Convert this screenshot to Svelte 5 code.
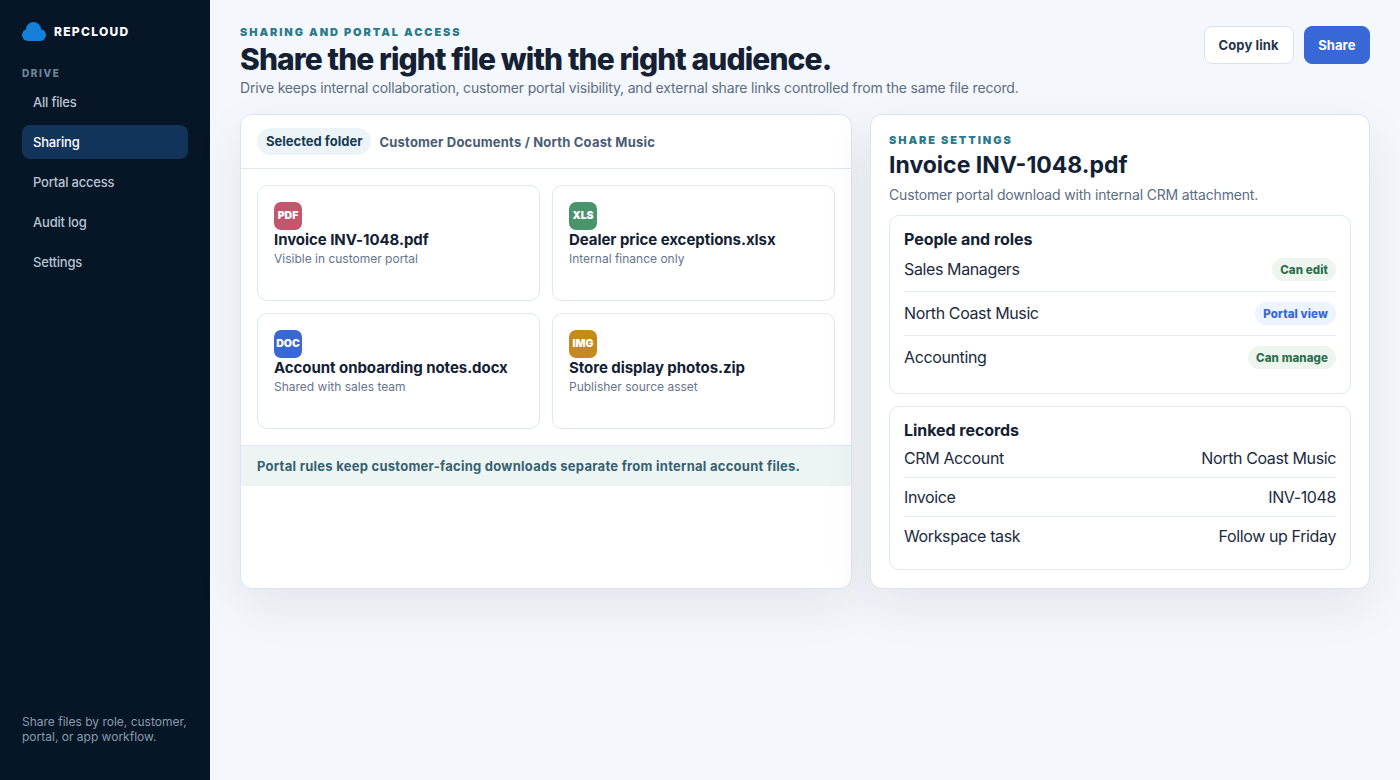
<script>
	const nav = ['All files', 'Sharing', 'Portal access', 'Audit log', 'Settings'];
	const files = [
		{ tag: 'PDF', color: '#c2566d', name: 'Invoice INV-1048.pdf', note: 'Visible in customer portal' },
		{ tag: 'XLS', color: '#4a946c', name: 'Dealer price exceptions.xlsx', note: 'Internal finance only' },
		{ tag: 'DOC', color: '#3867d6', name: 'Account onboarding notes.docx', note: 'Shared with sales team' },
		{ tag: 'IMG', color: '#c6891c', name: 'Store display photos.zip', note: 'Publisher source asset' }
	];
	const people = [
		{ name: 'Sales Managers', role: 'Can edit', kind: 'green' },
		{ name: 'North Coast Music', role: 'Portal view', kind: 'blue' },
		{ name: 'Accounting', role: 'Can manage', kind: 'green' }
	];
	const records = [
		['CRM Account', 'North Coast Music'],
		['Invoice', 'INV-1048'],
		['Workspace task', 'Follow up Friday']
	];
</script>

<div class="shell">
	<aside class="sidebar">
		<div class="brand">
			<svg width="24" height="19" viewBox="0 0 24 19" aria-hidden="true">
				<g fill="#1580da">
					<circle cx="11.500" cy="7.500" r="7.500" />
					<circle cx="6" cy="13" r="6" />
					<circle cx="18" cy="13" r="6" />
					<rect x="6" y="9" width="12" height="10" />
				</g>
			</svg>
			<span>REPCLOUD</span>
		</div>
		<div class="nav-title">DRIVE</div>
		<nav>
			{#each nav as item}
				<div class="nav-item" class:active={item === 'Sharing'}>{item}</div>
			{/each}
		</nav>
		<p class="side-note">Share files by role, customer, portal, or app workflow.</p>
	</aside>

	<main>
		<header class="top">
			<div>
				<div class="eyebrow">SHARING AND PORTAL ACCESS</div>
				<h1>Share the right file with the right audience.</h1>
				<p class="lead">Drive keeps internal collaboration, customer portal visibility, and external share links controlled from the same file record.</p>
			</div>
			<div class="actions">
				<button class="btn">Copy link</button>
				<button class="btn primary">Share</button>
			</div>
		</header>

		<div class="columns">
			<section class="panel">
				<div class="folder-bar">
					<span class="pill">Selected folder</span>
					<span class="path">Customer Documents / North Coast Music</span>
				</div>
				<div class="file-grid">
					{#each files as f}
						<div class="file-card">
							<span class="tag" style="background: {f.color}">{f.tag}</span>
							<div class="file-name">{f.name}</div>
							<div class="file-note">{f.note}</div>
						</div>
					{/each}
				</div>
				<div class="rule-note">Portal rules keep customer-facing downloads separate from internal account files.</div>
			</section>

			<section class="panel settings">
				<div class="eyebrow small">SHARE SETTINGS</div>
				<h2>Invoice INV-1048.pdf</h2>
				<p class="sub">Customer portal download with internal CRM attachment.</p>

				<div class="box people">
					<h3>People and roles</h3>
					{#each people as p}
						<div class="row">
							<span>{p.name}</span>
							<span class="badge {p.kind}">{p.role}</span>
						</div>
					{/each}
				</div>

				<div class="box records">
					<h3>Linked records</h3>
					{#each records as r}
						<div class="row">
							<span>{r[0]}</span>
							<span>{r[1]}</span>
						</div>
					{/each}
				</div>
			</section>
		</div>
	</main>
</div>

<style>
	:global(body) {
		margin: 0;
		font-family: Inter, 'Liberation Sans', sans-serif;
		background: #f4f7fb;
		color: #142033;
	}
	.shell {
		display: flex;
		height: 780px;
		overflow: hidden;
	}
	.sidebar {
		width: 210px;
		box-sizing: border-box;
		flex: none;
		background: #071626;
		padding: 19px 22px 36px;
		display: flex;
		flex-direction: column;
	}
	.brand {
		display: flex;
		align-items: center;
		gap: 8px;
		height: 24px;
		font-size: 12px;
		font-weight: 800;
		letter-spacing: 1.3px;
		color: #fff;
	}
	.nav-title {
		margin-top: 24px;
		font-size: 10px;
		line-height: 12px;
		font-weight: 800;
		letter-spacing: 1.6px;
		color: #71859b;
	}
	nav {
		margin-top: 6px;
		display: flex;
		flex-direction: column;
		gap: 6px;
	}
	.nav-item {
		height: 34px;
		line-height: 34px;
		padding-left: 11px;
		border-radius: 8px;
		font-size: 13px;
		font-weight: 500;
		letter-spacing: -0.2px;
		color: #b7c4d3;
	}
	.nav-item.active {
		background: #12345a;
		color: #fff;
	}
	.side-note {
		margin: auto 0 0;
		font-size: 12px;
		line-height: 15px;
		color: #8a9bad;
	}
	main {
		flex: 1;
		min-width: 0;
		padding: 26px 30px 0;
	}
	.top {
		display: flex;
		justify-content: space-between;
		align-items: flex-start;
	}
	.eyebrow {
		font-size: 11px;
		line-height: 13px;
		font-weight: 900;
		letter-spacing: 1.9px;
		color: #2a7a8c;
	}
	h1 {
		margin: 2px 0 0;
		font-size: 30px;
		line-height: 36px;
		font-weight: 800;
		letter-spacing: -0.9px;
		color: #142033;
	}
	.lead {
		margin: 0;
		font-size: 14px;
		line-height: 21px;
		letter-spacing: -0.17px;
		color: #5d6d82;
	}
	.actions {
		display: flex;
		gap: 10px;
	}
	.btn {
		height: 38px;
		box-sizing: border-box;
		padding: 0 14px;
		border: 1px solid #d9e3ee;
		border-radius: 8px;
		background: #fff;
		font: 700 13px Inter, sans-serif;
		letter-spacing: 0.1px;
		color: #26364b;
	}
	.btn.primary {
		padding: 0 13.500px;
		background: #3867d6;
		border-color: #3867d6;
		color: #fff;
	}
	.columns {
		margin-top: 16px;
		display: grid;
		grid-template-columns: 612px 500px;
		gap: 18px;
	}
	.panel {
		height: 475px;
		box-sizing: border-box;
		background: #fff;
		border: 1px solid #dbe4ef;
		border-radius: 12px;
		box-shadow: 0 18px 50px rgba(20, 40, 70, 0.08);
		overflow: hidden;
	}
	.folder-bar {
		display: flex;
		align-items: center;
		gap: 8px;
		height: 54px;
		box-sizing: border-box;
		padding: 0 16px;
		border-bottom: 1px solid #dfe7f1;
	}
	.pill {
		height: 27px;
		line-height: 27px;
		padding: 0 9px;
		border-radius: 14px;
		background: #edf4f7;
		font-size: 13px;
		font-weight: 700;
		color: #173b54;
	}
	.path {
		font-size: 13px;
		font-weight: 700;
		letter-spacing: 0.2px;
		color: #4a5c72;
	}
	.file-grid {
		display: grid;
		grid-template-columns: 283px 283px;
		gap: 12px;
		padding: 16px;
	}
	.file-card {
		height: 116px;
		box-sizing: border-box;
		padding: 16px;
		border: 1px solid #dfe7f1;
		border-radius: 10px;
	}
	.tag {
		display: block;
		width: 28px;
		height: 28px;
		line-height: 28px;
		text-align: center;
		border-radius: 7px;
		font-size: 10.500px;
		font-weight: 900;
		color: #fff;
	}
	.file-name {
		font-size: 15px;
		line-height: 20px;
		font-weight: 700;
		letter-spacing: -0.05px;
		color: #142033;
	}
	.file-note {
		margin-top: 1px;
		font-size: 12px;
		line-height: 16px;
		color: #66758a;
	}
	.rule-note {
		height: 41px;
		line-height: 40px;
		box-sizing: border-box;
		padding-left: 16px;
		border-top: 1px solid #dfe7f1;
		background: #edf5f4;
		font-size: 13px;
		font-weight: 700;
		letter-spacing: 0.26px;
		color: #386170;
	}
	.settings {
		padding: 19px 18px 18px;
	}
	.eyebrow.small {
		line-height: 12px;
	}
	h2 {
		margin: 5px 0 0;
		font-size: 23px;
		line-height: 28px;
		font-weight: 700;
		color: #142033;
	}
	.sub {
		margin: 7px 0 0;
		font-size: 14px;
		line-height: 18px;
		letter-spacing: -0.17px;
		color: #5d6d82;
	}
	.box {
		margin-top: 12px;
		box-sizing: border-box;
		padding: 14px 14px 0;
		border: 1px solid #dfe7f1;
		border-radius: 10px;
	}
	.people {
		margin-top: 11px;
		height: 179px;
	}
	.records {
		height: 164px;
	}
	h3 {
		margin: 0;
		font-size: 16px;
		line-height: 18px;
		font-weight: 700;
		letter-spacing: -0.05px;
		color: #142033;
	}
	.row {
		display: flex;
		justify-content: space-between;
		align-items: center;
		box-sizing: border-box;
		font-size: 16px;
		letter-spacing: -0.38px;
		color: #1c2a3e;
		border-bottom: 1px solid #e8edf3;
	}
	.row:last-child {
		border-bottom: 0;
	}
	.people .row {
		height: 44px;
		padding-bottom: 1px;
	}
	.records .row {
		height: 39px;
	}
	.people .row:last-child {
		padding-bottom: 3px;
	}
	.records .row:last-child {
		padding-bottom: 2px;
	}
	.badge {
		height: 23px;
		line-height: 24px;
		margin-top: 1px;
		padding: 0 8px;
		border-radius: 12px;
		font-size: 11.500px;
		font-weight: 800;
		letter-spacing: 0.1px;
	}
	.badge.green {
		background: #edf5ee;
		color: #2f6f4f;
	}
	.badge.blue {
		background: #edf3ff;
		color: #3867d6;
	}
</style>
